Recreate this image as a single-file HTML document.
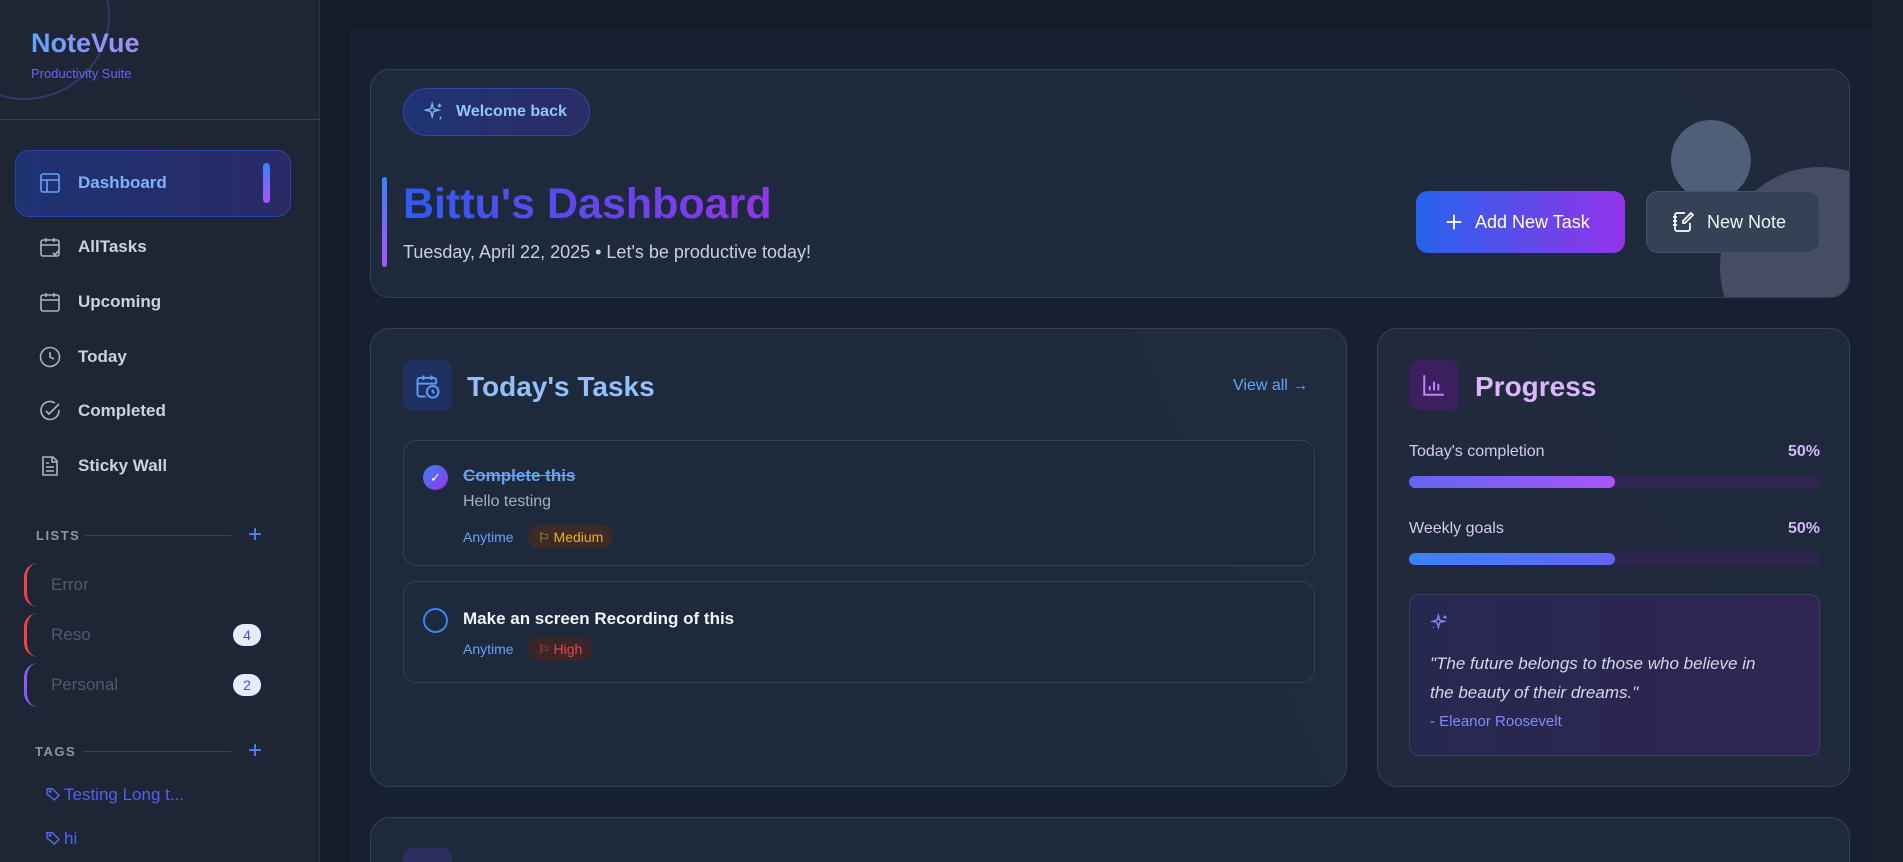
<!DOCTYPE html>
<html style="overflow:hidden;width:1903px;height:862px"><head><meta charset="utf-8"><style>
*{box-sizing:border-box;margin:0;padding:0}
body{width:1903px;height:862px;overflow:hidden;background:#141b2b;font-family:"Liberation Sans",sans-serif;position:relative}
.a{position:absolute}
.sb{left:0;top:0;width:320px;height:862px;background:#1e2636;border-right:1px solid #2c3648;overflow:hidden}
.nav{left:38px;width:250px;height:30px;display:flex;align-items:center;color:#cbd2dd;font-weight:bold;font-size:17px}
.nav svg{width:24px;height:24px;margin-right:16px;stroke:#aab3c2;fill:none;stroke-width:1.6}
.card{background:#1e293b;border:1px solid #334155;border-radius:20px;overflow:hidden}
.sec{font-size:13px;color:#8b95a6;letter-spacing:1.5px;font-weight:bold}
.list{left:24px;width:240px;height:44px;border-left:3px solid;border-radius:14px 0 0 14px;padding-left:24px;font-size:17px;color:#4f5a6c;line-height:44px}
.badge{position:absolute;right:3px;top:11px;width:28px;height:22px;border-radius:11px;background:#e7ebff;color:#4f46e5;font-size:14px;line-height:22px;text-align:center}
.task{left:32px;width:912px;border:1px solid #334155;border-radius:14px;background:#1e293b}
.pill{display:inline-block;height:24px;border-radius:12px;padding:0 10px 0 10px;font-size:14px;line-height:24px}
</style></head><body>
<div class="a" style="left:350px;top:29px;width:1522px;height:833px;background:#172031"></div>
<div class="a" style="left:1872px;top:0;width:31px;height:862px;background:#1a2130"></div>

<div class="a sb">
 <div class="a" style="left:-60px;top:-70px;width:170px;height:170px;border-radius:50%;border:2px solid #2f3a6a"></div>
 <div class="a" style="left:31px;top:28px;font-size:27px;font-weight:bold;background:linear-gradient(90deg,#60a5fa,#a78bfa);-webkit-background-clip:text;color:transparent">NoteVue</div>
 <div class="a" style="left:31px;top:66px;font-size:13px;color:#6366f1">Productivity Suite</div>
 <div class="a" style="left:0;top:119px;width:320px;height:1px;background:#334155"></div>
 <div class="a" style="left:15px;top:150px;width:276px;height:67px;border-radius:14px;border:1px solid #2747b0;background:linear-gradient(90deg,#1e3272,#2a2a66)"></div>
 <div class="a" style="left:263px;top:163px;width:7px;height:40px;border-radius:4px;background:linear-gradient(#3b82f6,#a855f7)"></div>
 <div class="a nav" style="top:168px;color:#7db4f5"><svg viewBox="0 0 24 24" style="stroke:#60a5fa"><rect x="3" y="3" width="18" height="18" rx="2"/><path d="M3 9h18M9 9v12"/></svg>Dashboard</div>
 <div class="a nav" style="top:232px"><svg viewBox="0 0 24 24"><rect x="3" y="5" width="18" height="16" rx="2"/><path d="M3 10h18M8 3v4M16 3v4M15 18l2 2 3-4"/></svg>AllTasks</div>
 <div class="a nav" style="top:287px"><svg viewBox="0 0 24 24"><rect x="3" y="5" width="18" height="16" rx="2"/><path d="M3 10h18M8 3v4M16 3v4"/></svg>Upcoming</div>
 <div class="a nav" style="top:342px"><svg viewBox="0 0 24 24"><circle cx="12" cy="12" r="9.5"/><path d="M12 7v5l4 2"/></svg>Today</div>
 <div class="a nav" style="top:396px"><svg viewBox="0 0 24 24"><path d="M21 11a9 9 0 1 1-4-7"/><path d="M8 12l3 3 10-10"/></svg>Completed</div>
 <div class="a nav" style="top:451px"><svg viewBox="0 0 24 24"><path d="M5 3h10l4 4v14H5z"/><path d="M14 3v5h5M8 13h8M8 17h8M8 9h3"/></svg>Sticky Wall</div>
 <div class="a sec" style="left:36px;top:528px">LISTS</div>
 <div class="a" style="left:85px;top:535px;width:146px;height:1px;background:#3a4558"></div>
 <div class="a" style="left:248px;top:521px;color:#4f8df5;font-size:24px">+</div>
 <div class="a list" style="top:563px;border-color:#ef4444">Error</div>
 <div class="a list" style="top:613px;border-color:#ef4444">Reso<span class="badge">4</span></div>
 <div class="a list" style="top:663px;border-color:#8b5cf6">Personal<span class="badge">2</span></div>
 <div class="a sec" style="left:35px;top:744px">TAGS</div>
 <div class="a" style="left:84px;top:751px;width:147px;height:1px;background:#3a4558"></div>
 <div class="a" style="left:248px;top:737px;color:#4f8df5;font-size:24px">+</div>
 <div class="a" style="left:45px;top:785px;font-size:17px;color:#5060f0"><svg width="16" height="16" viewBox="0 0 24 24" fill="none" stroke="#5b6cf5" stroke-width="2" style="vertical-align:-2px;margin-right:3px"><path d="M3 12V4h8l10 10-7 7z"/><circle cx="7.5" cy="8" r="1"/></svg>Testing Long t...</div>
 <div class="a" style="left:45px;top:829px;font-size:17px;color:#5060f0"><svg width="16" height="16" viewBox="0 0 24 24" fill="none" stroke="#5b6cf5" stroke-width="2" style="vertical-align:-2px;margin-right:3px"><path d="M3 12V4h8l10 10-7 7z"/><circle cx="7.5" cy="8" r="1"/></svg>hi</div>
</div>

<!-- header card -->
<div class="a card" style="left:370px;top:69px;width:1480px;height:229px">
 <div class="a" style="left:1250px;top:0;width:240px;height:229px;background:linear-gradient(225deg,#212a3d 40%,transparent 41%)"></div>
 <div class="a" style="left:1300px;top:50px;width:80px;height:80px;border-radius:50%;background:#4f5f78"></div>
 <div class="a" style="left:1349px;top:97px;width:200px;height:200px;border-radius:50%;background:#464c64"></div>
 <div class="a" style="left:32px;top:18px;width:187px;height:48px;border-radius:24px;border:1px solid #2a4aa8;background:linear-gradient(90deg,#1f3372,#2b2d66);color:#93c5fd;font-weight:bold;font-size:16px;line-height:46px;padding-left:52px">Welcome back</div>
 <svg class="a" style="left:52px;top:31px" width="22" height="22" viewBox="0 0 24 24" fill="none" stroke="#7db4f5" stroke-width="1.6"><path d="M10 3l1.5 5.5L17 10l-5.5 1.5L10 17l-1.5-5.5L3 10l5.5-1.5z"/><path d="M18 3v4M16 5h4M19 17v3"/></svg>
 <div class="a" style="left:11px;top:107px;width:5px;height:90px;border-radius:3px;background:linear-gradient(#3b82f6,#a855f7)"></div>
 <div class="a" style="left:32px;top:110px;font-size:43px;font-weight:bold;background:linear-gradient(90deg,#2f5bf0,#9333ea);-webkit-background-clip:text;color:transparent;white-space:nowrap">Bittu's Dashboard</div>
 <div class="a" style="left:32px;top:172px;font-size:18px;color:#c8d0dc">Tuesday, April 22, 2025 • Let's be productive today!</div>
 <div class="a" style="left:1045px;top:121px;width:209px;height:62px;border-radius:12px;background:linear-gradient(90deg,#2563eb,#9333ea);color:#fff;font-size:18px;line-height:62px;padding-left:59px">Add New Task</div>
 <svg class="a" style="left:1072px;top:141px" width="22" height="22" viewBox="0 0 24 24" stroke="#fff" stroke-width="2"><path d="M12 4v16M4 12h16"/></svg>
 <div class="a" style="left:1275px;top:121px;width:174px;height:62px;border-radius:12px;background:#354154;border:1px solid #47526a;color:#f1f5f9;font-size:18px;line-height:60px;padding-left:60px">New Note</div>
 <svg class="a" style="left:1300px;top:140px" width="24" height="24" viewBox="0 0 24 24" fill="none" stroke="#fff" stroke-width="1.7"><path d="M14 3H6a2 2 0 0 0-2 2v14a2 2 0 0 0 2 2h11a2 2 0 0 0 2-2v-6"/><path d="M2 7h4M2 11h4M2 15h4M20 3l2 2-8 8h-2v-2z"/></svg>
</div>

<!-- tasks card -->
<div class="a card" style="left:370px;top:328px;width:977px;height:459px">
 <div class="a" style="left:700px;top:0;width:277px;height:459px;background:linear-gradient(247deg,#212b3e 45%,transparent 46%)"></div>
 <div class="a" style="left:32px;top:31px;width:49px;height:51px;border-radius:10px;background:#1f3160"></div>
 <svg class="a" style="left:43px;top:42px" width="28" height="30" viewBox="0 0 24 24" fill="none" stroke="#5b9af5" stroke-width="1.7"><path d="M10 21H5a2 2 0 0 1-2-2V7a2 2 0 0 1 2-2h12a2 2 0 0 1 2 2v3M3 10h16M8 3v4M15 3v4"/><circle cx="16" cy="17" r="5"/><path d="M16 15v2l1.5 1"/></svg>
 <div class="a" style="left:96px;top:42px;font-size:28px;font-weight:bold;color:#93c0f8">Today's Tasks</div>
 <div class="a" style="left:862px;top:48px;font-size:16px;color:#60a5fa">View all →</div>
 <div class="a task" style="top:111px;height:126px"></div>
 <div class="a" style="left:52px;top:136px;width:25px;height:25px;border-radius:50%;background:linear-gradient(135deg,#3b82f6,#9333ea);color:#fff;font-size:13px;text-align:center;line-height:25px">✓</div>
 <div class="a" style="left:92px;top:137px;font-size:17px;font-weight:bold;color:#60a5fa;text-decoration:line-through">Complete this</div>
 <div class="a" style="left:92px;top:164px;font-size:16px;color:#a7b0bd">Hello testing</div>
 <div class="a" style="left:92px;top:196px;font-size:14px;color:#60a5fa;line-height:24px">Anytime</div>
 <div class="a pill" style="left:157px;top:196px;background:#3a2b29;color:#eab308"><span style="font-size:13px">⚐</span> Medium</div>
 <div class="a task" style="top:252px;height:102px"></div>
 <div class="a" style="left:52px;top:279px;width:25px;height:25px;border-radius:50%;border:2px solid #3b82f6"></div>
 <div class="a" style="left:92px;top:280px;font-size:17px;font-weight:bold;color:#f1f5f9">Make an screen Recording of this</div>
 <div class="a" style="left:92px;top:308px;font-size:14px;color:#60a5fa;line-height:24px">Anytime</div>
 <div class="a pill" style="left:157px;top:308px;background:#3a2629;color:#ef4444"><span style="font-size:13px">⚐</span> High</div>
</div>

<!-- progress card -->
<div class="a card" style="left:1377px;top:328px;width:473px;height:459px">
 <div class="a" style="left:0;top:0;width:473px;height:459px;background:linear-gradient(235deg,transparent 40%,#212a3d 41%)"></div>
 <div class="a" style="left:31px;top:31px;width:50px;height:50px;border-radius:10px;background:#3b1f5e"></div>
 <svg class="a" style="left:43px;top:43px" width="26" height="26" viewBox="0 0 24 24" fill="none" stroke="#c084fc" stroke-width="1.8"><path d="M3 3v18h18M8 17v-4M12 17V9M16 17v-6"/></svg>
 <div class="a" style="left:97px;top:42px;font-size:28px;font-weight:bold;color:#dbb5fd">Progress</div>
 <div class="a" style="left:31px;top:114px;font-size:16px;color:#d6c9f0">Today's completion</div>
 <div class="a" style="left:390px;top:114px;width:52px;text-align:right;font-size:16px;font-weight:bold;color:#d8b4fe">50%</div>
 <div class="a" style="left:31px;top:147px;width:411px;height:12px;border-radius:6px;background:#2f2550"><div style="width:50%;height:12px;border-radius:6px;background:linear-gradient(90deg,#6366f1,#a855f7)"></div></div>
 <div class="a" style="left:31px;top:191px;font-size:16px;color:#d6c9f0">Weekly goals</div>
 <div class="a" style="left:390px;top:191px;width:52px;text-align:right;font-size:16px;font-weight:bold;color:#d8b4fe">50%</div>
 <div class="a" style="left:31px;top:224px;width:411px;height:12px;border-radius:6px;background:#2f2550"><div style="width:50%;height:12px;border-radius:6px;background:linear-gradient(90deg,#3b82f6,#6366f1)"></div></div>
 <div class="a" style="left:31px;top:265px;width:411px;height:162px;border-radius:10px;border:1px solid #3a3e63;background:linear-gradient(90deg,#27284f,#2e2553)"></div>
 <svg class="a" style="left:52px;top:284px" width="20" height="20" viewBox="0 0 24 24" fill="none" stroke="#7c83f5" stroke-width="1.8"><path d="M10 3l1.5 5.5L17 10l-5.5 1.5L10 17l-1.5-5.5L3 10l5.5-1.5z"/><path d="M18 3v4M16 5h4M4 17v1"/></svg>
 <div class="a" style="left:52px;top:320px;width:345px;font-size:17px;line-height:29px;font-style:italic;color:#d4d7e6">"The future belongs to those who believe in the beauty of their dreams."</div>
 <div class="a" style="left:52px;top:384px;font-size:15px;color:#818cf8">- Eleanor Roosevelt</div>
</div>

<!-- bottom card -->
<div class="a card" style="left:370px;top:817px;width:1480px;height:45px;border-bottom:none;border-radius:20px 20px 0 0">
 <div class="a" style="left:32px;top:30px;width:49px;height:50px;border-radius:10px;background:#2a2f5e"></div>
</div>
</body></html>
